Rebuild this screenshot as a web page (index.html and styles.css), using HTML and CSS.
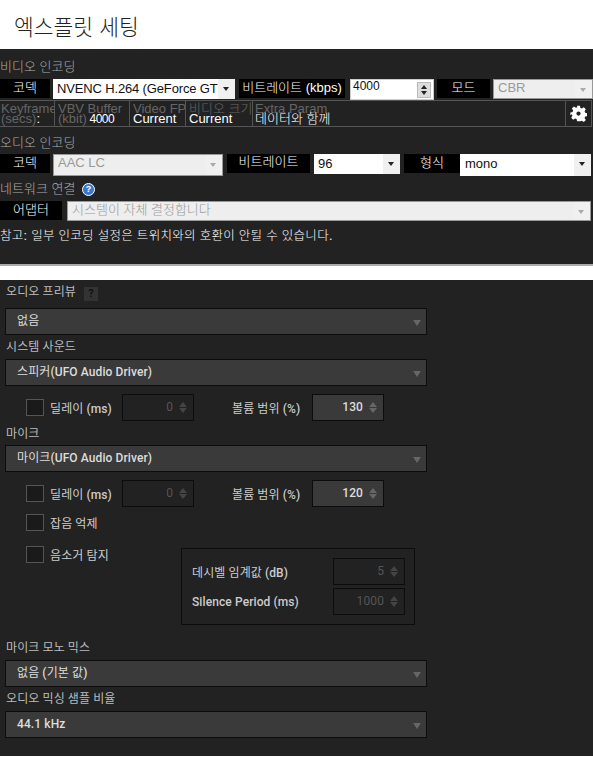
FILE: index.html
```html
<!DOCTYPE html>
<html lang="ko">
<head>
  <meta charset="UTF-8">
  <meta name="viewport" content="width=device-width, initial-scale=1.0">
  <title>엑스플릿 세팅</title>
  <link rel="stylesheet" href="styles.css">
</head>
<body>
  <h1 class="title">엑스플릿 세팅</h1>

  <!-- 엑스플릿 -->
  <div class="xsplit">
    <div class="x-head">비디오 인코딩</div>
    <div class="x-row r-video">
      <div class="tag tag-codec">코덱</div>
      <div class="pick w-codec">NVENC H.264 (GeForce GT><span class="drop"></span></div>
      <div class="tag tag-rate">비트레이트 (kbps)</div>
      <div class="num">4000<span class="updown"><i class="up"></i><i class="down"></i></span></div>
      <div class="tag tag-mode">모드</div>
      <div class="pick off w-mode">CBR<span class="drop"></span></div>
    </div>
    <div class="params">
      <div class="cell c1"><span class="dim">Keyframe<br>(secs)</span>:</div>
      <div class="cell c2"><span class="dim">VBV Buffer<br>(kbit)</span> <span class="val">4000</span></div>
      <div class="cell c3"><span class="dim">Video FPS</span><br>Current</div>
      <div class="cell c4"><span class="dim">비디오 크기</span><br>Current</div>
      <div class="cell c5"><span class="dim">Extra Param</span><br>데이터와 함께</div>
      <div class="gear">
        <svg width="17" height="17" viewBox="0 0 24 24"><path fill="#fff" fill-rule="evenodd" d="M10 1h4l.7 3.2 2 .8L19.500 3.300l2.800 2.800-1.700 2.800.8 2 3.100.7v4l-3.100.7-.8 2 1.700 2.800-2.800 2.800-2.800-1.700-2 .8L14 23h-4l-.7-3.100-2-.8-2.800 1.700-2.800-2.800 1.700-2.800-.8-2L.500 14.500v-4l3.100-.7.8-2-1.700-2.800 2.800-2.800 2.800 1.700 2-.8zM12 9a3 3 0 1 0 0 6 3 3 0 0 0 0-6z"/></svg>
      </div>
    </div>

    <div class="x-head h-audio">오디오 인코딩</div>
    <div class="x-row r-audio">
      <div class="tag tag-codec">코덱</div>
      <div class="pick off w-acodec">AAC LC<span class="drop"></span></div>
      <div class="tag tag-abit">비트레이트</div>
      <div class="pick w-abit">96<span class="drop"></span></div>
      <div class="tag tag-form">형식</div>
      <div class="pick w-form">mono<span class="drop"></span></div>
    </div>

    <div class="x-head h-net">네트워크 연결 <span class="help">?</span></div>
    <div class="x-row r-net">
      <div class="tag tag-adapter">어댑터</div>
      <div class="pick off w-net">시스템이 자체 결정합니다<span class="drop"></span></div>
    </div>
    <p class="note">참고: 일부 인코딩 설정은 트위치와의 호환이 안될 수 있습니다.</p>
  </div>

  <!-- 오디오 설정 -->
  <div class="audio">
    <div class="label first">오디오 프리뷰 <span class="hint">?</span></div>
    <div class="select">없음</div>

    <div class="label">시스템 사운드</div>
    <div class="select">스피커<b>(UFO Audio Driver)</b></div>
    <div class="opts">
      <span class="check"></span>
      <span class="opt-name delay">딜레이 <b>(ms)</b></span>
      <div class="spin dis">0<span class="arrows"></span></div>
      <span class="opt-name range">볼륨 범위 <b>(%)</b></span>
      <div class="spin"><b>130</b><span class="arrows"></span></div>
    </div>

    <div class="label l-mic">마이크</div>
    <div class="select">마이크<b>(UFO Audio Driver)</b></div>
    <div class="opts">
      <span class="check"></span>
      <span class="opt-name delay">딜레이 <b>(ms)</b></span>
      <div class="spin dis">0<span class="arrows"></span></div>
      <span class="opt-name range">볼륨 범위 <b>(%)</b></span>
      <div class="spin"><b>120</b><span class="arrows"></span></div>
    </div>
    <div class="opts noise">
      <span class="check"></span>
      <span class="opt-name">잡음 억제</span>
    </div>
    <div class="mute">
      <div class="mute-left">
        <span class="check"></span>
        <span class="opt-name">음소거 탐지</span>
      </div>
      <div class="mute-box">
        <div class="mute-row">
          <span class="opt-name">데시벨 임계값 <b>(dB)</b></span>
          <div class="spin dis">5<span class="arrows"></span></div>
        </div>
        <div class="mute-row">
          <span class="opt-name"><b>Silence Period (ms)</b></span>
          <div class="spin dis">1000<span class="arrows"></span></div>
        </div>
      </div>
    </div>

    <div class="label l-mono">마이크 모노 믹스</div>
    <div class="select">없음 <b>(</b>기본 값<b>)</b></div>
    <div class="label">오디오 믹싱 샘플 비율</div>
    <div class="select"><b>44.1 kHz</b></div>
  </div>
</body>
</html>
```

FILE: styles.css
```css
body { margin: 0; background: #fff; font-family: "Liberation Sans", "Noto Sans CJK KR", sans-serif; }
.title { margin: 0; height: 49px; padding-left: 14px; font-family: "Noto Sans CJK KR", sans-serif; font-size: 21.500px; font-weight: 300; line-height: 51px; color: #222; box-sizing: border-box; }

/* top panel */
.xsplit { background: #222; height: 215px; border-bottom: 2px solid #aaa; box-sizing: content-box; overflow: hidden; font-size: 13px; font-weight: 300; color: #fff; font-family: "Liberation Sans", "Noto Sans CJK KR", sans-serif; }
.x-head { color: #aaa; height: 30px; line-height: 36px; }
.h-audio { height: 27px; line-height: 31px; margin-top: 0; }
.h-net { height: 25px; line-height: 26px; }
.x-row { display: flex; align-items: flex-start; }
.tag { background: #000; height: 19px; line-height: 18px; text-align: center; color: #fff; }
.pick { position: relative; background: #fff; color: #111; height: 20px; line-height: 19px; padding-left: 4px; box-sizing: border-box; overflow: hidden; white-space: nowrap; }
.pick.off { background: #eee; color: #999; border: 1px solid #999; line-height: 15px; }
.drop { position: absolute; right: 0; top: 0; bottom: 0; width: 17px; background: #f0f0f0; }
.drop::after { content: ""; position: absolute; left: 5px; top: 8px; border: 3px solid transparent; border-top: 4px solid #222; }
.off .drop::after { border-top-color: #aaa; }

.tag-codec { width: 50px; margin-right: 3px; }
.w-codec { width: 182px; margin-right: 4px; letter-spacing: -0.15px; }
.tag-rate { width: 106px; margin-right: 5px; }
.num { position: relative; width: 84px; height: 21px; background: #fff; color: #111; border: 1px solid #ccc; box-sizing: border-box; line-height: 13px; padding-left: 2px; font-size: 12px; }
.updown { position: absolute; right: 2px; top: 2px; width: 14px; height: 16px; background: #ddd; border: 1px solid #bbb; box-sizing: border-box; }
.updown i { position: absolute; left: 3px; border: 3px solid transparent; }
.updown .up { top: -1px; border-bottom: 4px solid #222; }
.updown .down { bottom: -1px; border-top: 4px solid #222; }
.tag-mode { width: 53px; margin-left: 3px; margin-right: 3px; }
.w-mode { width: 100px; }

.params { display: flex; height: 27px; width: 592px; border: 1px solid #555; border-width: 1px 1px 1px 0; box-sizing: border-box; line-height: 10px; font-size: 13px; }
.cell { border-right: 1px solid #555; box-sizing: border-box; overflow: hidden; white-space: nowrap; padding-top: 3px; height: 25px; }
.dim { color: #666; }
.val { font-size: 12px; letter-spacing: -0.5px; margin-left: -1px; }
.c1 { width: 55px; padding-left: 1px; }
.c2 { width: 75px; padding-left: 3px; }
.c3 { width: 56px; padding-left: 3px; }
.c4 { width: 67px; padding-left: 3px; }
.c5 { width: 313px; padding-left: 2px; }
.gear { flex: 1; display: flex; align-items: center; justify-content: center; }

.w-acodec { width: 170px; height: 22px; margin-right: 4px; }
.tag-abit { width: 83px; margin-right: 4px; line-height: 15px; }
.w-abit { width: 86px; margin-right: 4px; }
.tag-form { width: 56px; }
.w-form { width: 131px; height: 22px; padding-left: 5px; }

.help { display: inline-block; width: 11px; height: 11px; margin-left: 3px; border-radius: 50%; background: #3c78c8; border: 1px solid #fff; color: #fff; font-size: 9px; font-weight: bold; line-height: 11px; text-align: center; vertical-align: 1px; }
.tag-adapter { width: 62px; margin-right: 5px; }
.w-net { width: 524px; padding-left: 4px; line-height: 18px; }
.note { margin: 6px 0 0; line-height: 18px; color: #fff; font-size: 12.500px; letter-spacing: 0.3px; white-space: nowrap; }

/* audio panel */
.audio { margin-top: 14px; background: #222; height: 476px; box-sizing: border-box; padding-left: 5px; overflow: hidden; font-family: Roboto, "Noto Sans CJK KR", sans-serif; font-size: 12px; font-weight: 400; letter-spacing: 0.1px; color: #ccc; }
.audio b { font-weight: 500; }
.label { height: 24px; line-height: 25px; padding-left: 1px; color: #bbb; }
.label.first { height: 28px; line-height: 25px; }
.hint { display: inline-block; width: 14px; height: 14px; margin-left: 5px; background: #333; color: #111; font-size: 11px; font-weight: bold; line-height: 14px; text-align: center; vertical-align: -1px; }
.select { position: relative; width: 422px; height: 27px; background: #3a3a3a; border: 1px solid #0c0c0c; box-sizing: border-box; line-height: 25px; padding-left: 11px; color: #ddd; }
.select::after { content: ""; position: absolute; right: 5px; top: 11px; border: 4px solid transparent; border-top: 6px solid #666; }

.opts { display: flex; align-items: center; height: 27px; margin-top: 8px; padding-left: 21px; }
.check { width: 18px; height: 17px; flex: none; background: #1a1a1a; border: 1px solid #555; box-sizing: border-box; }
.opt-name { color: #ccc; white-space: nowrap; }
.delay { width: 72px; margin-left: 6px; }
.range { width: 80px; margin-left: 38px; }
.spin { position: relative; width: 72px; height: 27px; flex: none; background: #3a3a3a; border: 1px solid #0c0c0c; box-sizing: border-box; line-height: 25px; text-align: right; padding-right: 20px; color: #ddd; }
.spin.dis { background: #222; color: #555; }
.arrows { position: absolute; right: 6px; top: 7px; width: 8px; height: 11px; }
.arrows::before, .arrows::after { content: ""; position: absolute; left: 0; border: 4px solid transparent; }
.arrows::before { top: -4px; border-bottom: 5px solid #666; }
.arrows::after { bottom: -4px; border-top: 5px solid #666; }
.dis .arrows::before { border-bottom-color: #444; }
.dis .arrows::after { border-top-color: #444; }

.l-mic { margin-top: -3px; height: 27px; line-height: 33px; }
.noise { height: 17px; margin-top: 7px; }
.noise .check { margin-right: 6px; }
.mute { display: flex; align-items: flex-start; margin-top: 15px; padding-left: 21px; }
.mute-left { display: flex; align-items: center; width: 155px; }
.mute-left .check { margin-right: 6px; }
.mute-box { width: 234px; height: 77px; margin-top: 2px; border: 1px solid #0c0c0c; box-sizing: border-box; padding: 9px 9px 0 10px; }
.mute-row { display: flex; justify-content: space-between; align-items: center; margin-bottom: 3px; }

.l-mono { margin-top: 9px; height: 26px; line-height: 28px; }
```
